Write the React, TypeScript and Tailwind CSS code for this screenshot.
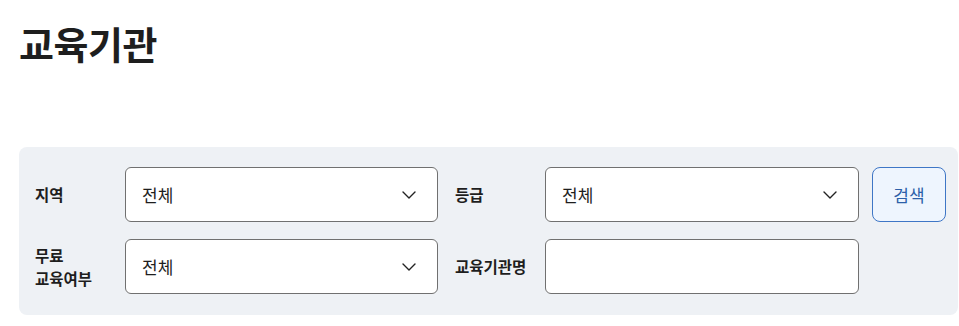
const font = "font-['Noto_Sans_CJK_KR','Noto_Sans',sans-serif]";

function Chevron() {
  return (
    <svg width="16" height="10" viewBox="0 0 16 10" fill="none" aria-hidden="true">
      <path d="M2 2l6 6 6-6" stroke="#222" strokeWidth="1.4" strokeLinecap="round" strokeLinejoin="round" />
    </svg>
  );
}

function SelectBox({ value }: { value: string }) {
  return (
    <div className="h-[55px] bg-white border border-[#707070] rounded-[6px] flex items-center justify-between pl-4 pr-5">
      <span className="text-[17px] text-[#1e1e1e]">{value}</span>
      <Chevron />
    </div>
  );
}

function Label({ children }: { children: React.ReactNode }) {
  return (
    <div className="w-[90px] pr-2 text-[15.5px] font-bold text-[#1e1e1e] leading-[23px] break-keep">{children}</div>
  );
}

export default function App() {
  return (
    <div className={`${font} bg-white w-[959px] h-[326px] pl-[19px] pt-[20px]`}>
      <h1 className="text-[38px] font-bold text-[#1e1e1e] leading-[46px] tracking-[-0.5px]">교육기관</h1>
      <div className="mt-[81px] w-[939px] bg-[#eef1f5] rounded-[8px] pl-4 pr-3 pt-5 pb-[21px] flex flex-col gap-[17px]">
        <div className="flex items-center">
          <Label>지역</Label>
          <div className="w-[313px]"><SelectBox value="전체" /></div>
          <div className="w-[17px]" />
          <Label>등급</Label>
          <div className="w-[314px]"><SelectBox value="전체" /></div>
          <button className="ml-[13px] w-[74px] h-[55px] rounded-[8px] border border-[#3e76c6] bg-[#eef5fe] text-[17px] text-[#2c5fa8]">
            검색
          </button>
        </div>
        <div className="flex items-center">
          <Label>무료 교육여부</Label>
          <div className="w-[313px]"><SelectBox value="전체" /></div>
          <div className="w-[17px]" />
          <Label>교육기관명</Label>
          <input className="w-[314px] h-[55px] bg-white border border-[#707070] rounded-[6px] px-4 text-[17px] outline-none" />
        </div>
      </div>
    </div>
  );
}
